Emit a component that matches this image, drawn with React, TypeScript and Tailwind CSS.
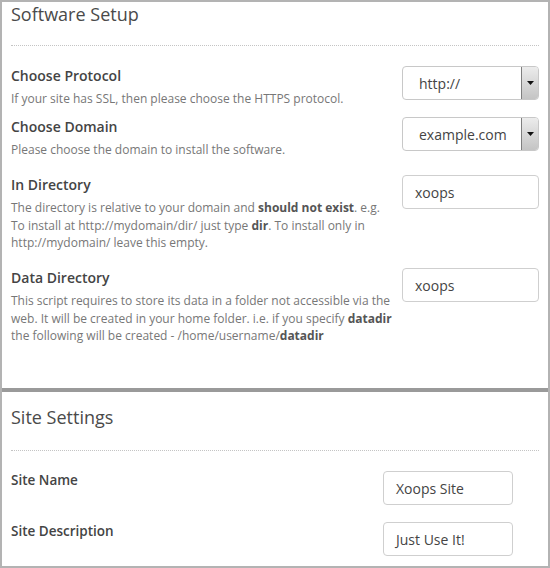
import type { ReactNode } from "react";

const font = { fontFamily: "'Open Sans', 'Noto Sans', sans-serif" };

function SelectBox({ value }: { value: string }) {
  return (
    <div className="flex h-[34px] w-[137px] overflow-hidden rounded-[4px] border border-[#c8c8c8] bg-white">
      <div className="flex flex-1 items-center pl-[16px] text-[14px] text-[#444]">
        {value}
      </div>
      <div className="-my-[1px] -mr-[1px] flex w-[18px] items-center justify-center border border-[#7e7e7e] bg-gradient-to-b from-[#ececec] to-[#c4c4c4]">
        <svg width="7" height="4" viewBox="0 0 7 4">
          <polygon points="0,0 7,0 3.5,4" fill="#111" />
        </svg>
      </div>
    </div>
  );
}

function TextBox({ value, width = "w-[137px]" }: { value: string; width?: string }) {
  return (
    <div
      className={`flex h-[34px] ${width} items-center rounded-[4px] border border-[#cfcfcf] bg-white pl-[12px] text-[14px] text-[#444]`}
    >
      {value}
    </div>
  );
}

function Label({ children, size = "text-[14px]" }: { children: ReactNode; size?: string }) {
  return (
    <div className={`${size} font-semibold leading-[20px] text-[#444]`}>
      {children}
    </div>
  );
}

function Desc({ children }: { children: ReactNode }) {
  return (
    <div className="mt-[4px] whitespace-nowrap text-[12px] leading-[17.5px] text-[#777]">
      {children}
    </div>
  );
}

function B({ children }: { children: ReactNode }) {
  return <span className="font-bold text-[#555]">{children}</span>;
}

export default function App() {
  return (
    <div
      className="box-border h-[568px] w-[550px] border-2 border-[#b3b3b3] bg-white"
      style={font}
    >
      {/* Software Setup */}
      <section className="h-[386px] px-[9px] pt-[2px]">
        <h2 className="text-[18px] leading-[20px] text-[#4a4a4a]">Software Setup</h2>
        <div className="mt-[21px] border-t border-dotted border-[#c4c4c4]" />

        <div className="mt-[20px] flex items-start justify-between">
          <div>
            <Label>Choose Protocol</Label>
            <Desc>If your site has SSL, then please choose the HTTPS protocol.</Desc>
          </div>
          <SelectBox value="http://" />
        </div>

        <div className="mt-[9.5px] flex items-start justify-between">
          <div>
            <Label>Choose Domain</Label>
            <Desc>Please choose the domain to install the software.</Desc>
          </div>
          <SelectBox value="example.com" />
        </div>

        <div className="mt-[16.5px] flex items-start justify-between">
          <div>
            <Label>In Directory</Label>
            <Desc>
              The directory is relative to your domain and <B>should not exist</B>. e.g.
              <br />
              To install at http://mydomain/dir/ just type <B>dir</B>. To install only in
              <br />
              http://mydomain/ leave this empty.
            </Desc>
          </div>
          <TextBox value="xoops" />
        </div>

        <div className="mt-[16.5px] flex items-start justify-between">
          <div>
            <Label>Data Directory</Label>
            <Desc>
              This script requires to store its data in a folder not accessible via the
              <br />
              web. It will be created in your home folder. i.e. if you specify <B>datadir</B>
              <br />
              the following will be created - /home/username/<B>datadir</B>
            </Desc>
          </div>
          <TextBox value="xoops" />
        </div>
      </section>

      <div className="h-[4px] bg-[#9a9a9a]" />

      {/* Site Settings */}
      <section className="px-[9px] pt-[15px]">
        <h2 className="text-[18px] leading-[20px] text-[#4a4a4a]">Site Settings</h2>
        <div className="mt-[23px] border-t border-dotted border-[#c4c4c4]" />

        <div className="mt-[19px] flex items-start justify-between pr-[26px]">
          <Label size="text-[13.5px]">Site Name</Label>
          <div className="mt-[1px]">
            <TextBox value="Xoops Site" width="w-[130px]" />
          </div>
        </div>

        <div className="mt-[16px] flex items-start justify-between pr-[26px]">
          <Label size="text-[13.5px]">Site Description</Label>
          <div className="mt-[1px]">
            <TextBox value="Just Use It!" width="w-[130px]" />
          </div>
        </div>
      </section>
    </div>
  );
}
